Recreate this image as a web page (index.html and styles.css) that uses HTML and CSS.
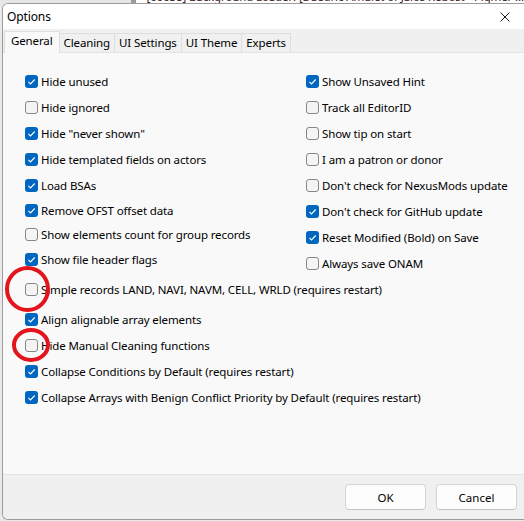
FILE: index.html
```html
<!DOCTYPE html>
<html>
<head>
<title>Options</title>
<link rel="stylesheet" href="styles.css">
</head>
<body>

  <div class="behind">
    <span class="behind-grid"></span>
    <span class="behind-bar"></span>
    <span class="behind-text">[00638] Background Loader: [Daedric Amulet of Jalos Rebost - Pigmer ...</span>
  </div>

  <div class="dialog">
    <header class="titlebar">
      <span class="title">Options</span>
      <svg class="close" width="10" height="10" viewBox="0 0 10 10"><path d="M0.5 0.5 L9.5 9.5 M9.5 0.5 L0.5 9.5" stroke="#1a1a1a" stroke-width="1" fill="none"/></svg>
    </header>

    <nav class="tabs">
      <span class="tab active">General</span>
      <span class="tab">Cleaning</span>
      <span class="tab">UI Settings</span>
      <span class="tab">UI Theme</span>
      <span class="tab">Experts</span>
    </nav>

    <section class="page">
      <div class="columns">
        <div class="col col-left">
          <label class="row"><span class="box on"></span>Hide unused</label>
          <label class="row"><span class="box"></span>Hide ignored</label>
          <label class="row"><span class="box on"></span>Hide "never shown"</label>
          <label class="row"><span class="box on"></span>Hide templated fields on actors</label>
          <label class="row"><span class="box on"></span>Load BSAs</label>
          <label class="row short"><span class="box on"></span>Remove OFST offset data</label>
          <label class="row short"><span class="box"></span>Show elements count for group records</label>
          <label class="row"><span class="box on"></span>Show file header flags</label>
        </div>
        <div class="col">
          <label class="row"><span class="box on"></span>Show Unsaved Hint</label>
          <label class="row"><span class="box"></span>Track all EditorID</label>
          <label class="row"><span class="box"></span>Show tip on start</label>
          <label class="row"><span class="box"></span>I am a patron or donor</label>
          <label class="row"><span class="box"></span>Don't check for NexusMods update</label>
          <label class="row"><span class="box on"></span>Don't check for GitHub update</label>
          <label class="row"><span class="box on"></span>Reset Modified (Bold) on Save</label>
          <label class="row"><span class="box"></span>Always save ONAM</label>
        </div>
      </div>
      <div class="col">
        <label class="row"><span class="box"></span>Simple records LAND, NAVI, NAVM, CELL, WRLD (requires restart)</label>
        <label class="row spaced"><span class="box on"></span>Align alignable array elements</label>
        <label class="row"><span class="box"></span>Hide Manual Cleaning functions</label>
        <label class="row"><span class="box on"></span>Collapse Conditions by Default (requires restart)</label>
        <label class="row"><span class="box on"></span>Collapse Arrays with Benign Conflict Priority by Default (requires restart)</label>
      </div>
    </section>

    <footer class="buttons">
      <button class="btn">OK</button>
      <button class="btn">Cancel</button>
    </footer>
  </div>

  <!-- red marks drawn over the screenshot -->
  <svg class="marks" width="524" height="521" viewBox="0 0 524 521">
    <ellipse cx="27.5" cy="289" rx="20.5" ry="21" fill="none" stroke="#e3141c" stroke-width="4"/>
    <ellipse cx="31" cy="345" rx="17" ry="15" fill="none" stroke="#e3141c" stroke-width="4"/>
  </svg>

</body>
</html>
```

FILE: styles.css
```css
/* Layout */
html,
body {
  margin: 0;
  height: 100%;
  background: #e9e9e9;
  overflow: hidden;
}

body {
  font-family: 'Noto Sans', 'Open Sans', sans-serif;
  font-size: 11.5px;
  letter-spacing: -0.12px;
  color: #000;
  position: relative;
}

/* Window behind the dialog */
.behind {
  height: 3px;
  display: flex;
  align-items: flex-end;
  overflow: hidden;
  background: #fff;
}

.behind-grid {
  width: 136px;
  height: 100%;
  background: #e6e6e6;
}

.behind-bar {
  width: 6px;
  height: 100%;
  background: #9a9a9a;
  margin-right: 10px;
}

.behind-text {
  white-space: nowrap;
  line-height: 12px;
  color: #3a1a1a;
}

/* Dialog */
.dialog {
  margin-left: 2px;
  height: 517px;
  box-sizing: border-box;
  border: 1px solid #9c9c9c;
  border-right: 0;
  border-radius: 6px 0 0 6px;
  display: flex;
  flex-direction: column;
  background: #fff;
  overflow: hidden;
}

.titlebar {
  height: 25px;
  display: flex;
  align-items: center;
  justify-content: space-between;
  padding: 0 6px 0 4px;
  background: #fff;
}

.title {
  font-size: 12px;
}

.close {
  margin-right: 8px;
}

/* Tabs */
.tabs {
  height: 23px;
  display: flex;
  align-items: flex-end;
  padding-left: 1px;
  background: #f0f0f0;
}

.tab {
  height: 19px;
  line-height: 18px;
  padding: 0 4px;
  box-sizing: border-box;
  border: 1px solid #dedede;
  border-bottom: 0;
  border-left: 0;
  background: #f0f0f0;
}

.tab.active {
  height: 22px;
  line-height: 18px;
  padding: 0 6px;
  border-left: 1px solid #dedede;
  background: #f9f9f9;
  margin-bottom: -1px;
  position: relative;
}

/* Page */
.page {
  flex: 1;
  background: #f9f9f9;
  border-top: 1px solid #e3e3e3;
  padding: 15px 0 0 22px;
}

.columns {
  display: flex;
}

.col {
  display: flex;
  flex-direction: column;
}

.col-left {
  width: 281px;
}

.row {
  height: 26px;
  display: flex;
  align-items: center;
  white-space: nowrap;
}

.row.short {
  height: 24px;
}

.row.spaced {
  margin-top: 4px;
}

.box {
  width: 13px;
  height: 13px;
  box-sizing: border-box;
  border: 1px solid #878787;
  border-radius: 3px;
  background: #f4f4f4;
  margin-right: 3px;
  flex: none;
}

.box.on {
  border: 0;
  background: #0067c0 url("data:image/svg+xml,%3Csvg xmlns='http://www.w3.org/2000/svg' viewBox='0 0 13 13'%3E%3Cpath d='M3.4 6.9 L5.5 8.9 L9.7 4.5' fill='none' stroke='white' stroke-width='1.1'/%3E%3C/svg%3E") center / 13px 13px no-repeat;
}

/* Buttons */
.buttons {
  height: 45px;
  box-sizing: border-box;
  border-top: 1px solid #e3e3e3;
  background: #f0f0f0;
  display: flex;
  justify-content: flex-end;
  align-items: flex-start;
  gap: 10px;
  padding: 9px 7px 0 0;
}

.btn {
  width: 81px;
  height: 26px;
  font: inherit;
  color: #000;
  background: #fdfdfd;
  border: 1px solid #d4d4d4;
  border-bottom-color: #c4c4c4;
  border-radius: 4px;
  padding: 0;
}

/* Annotation marks */
.marks {
  position: absolute;
  top: 0;
  left: 0;
  pointer-events: none;
}
```
